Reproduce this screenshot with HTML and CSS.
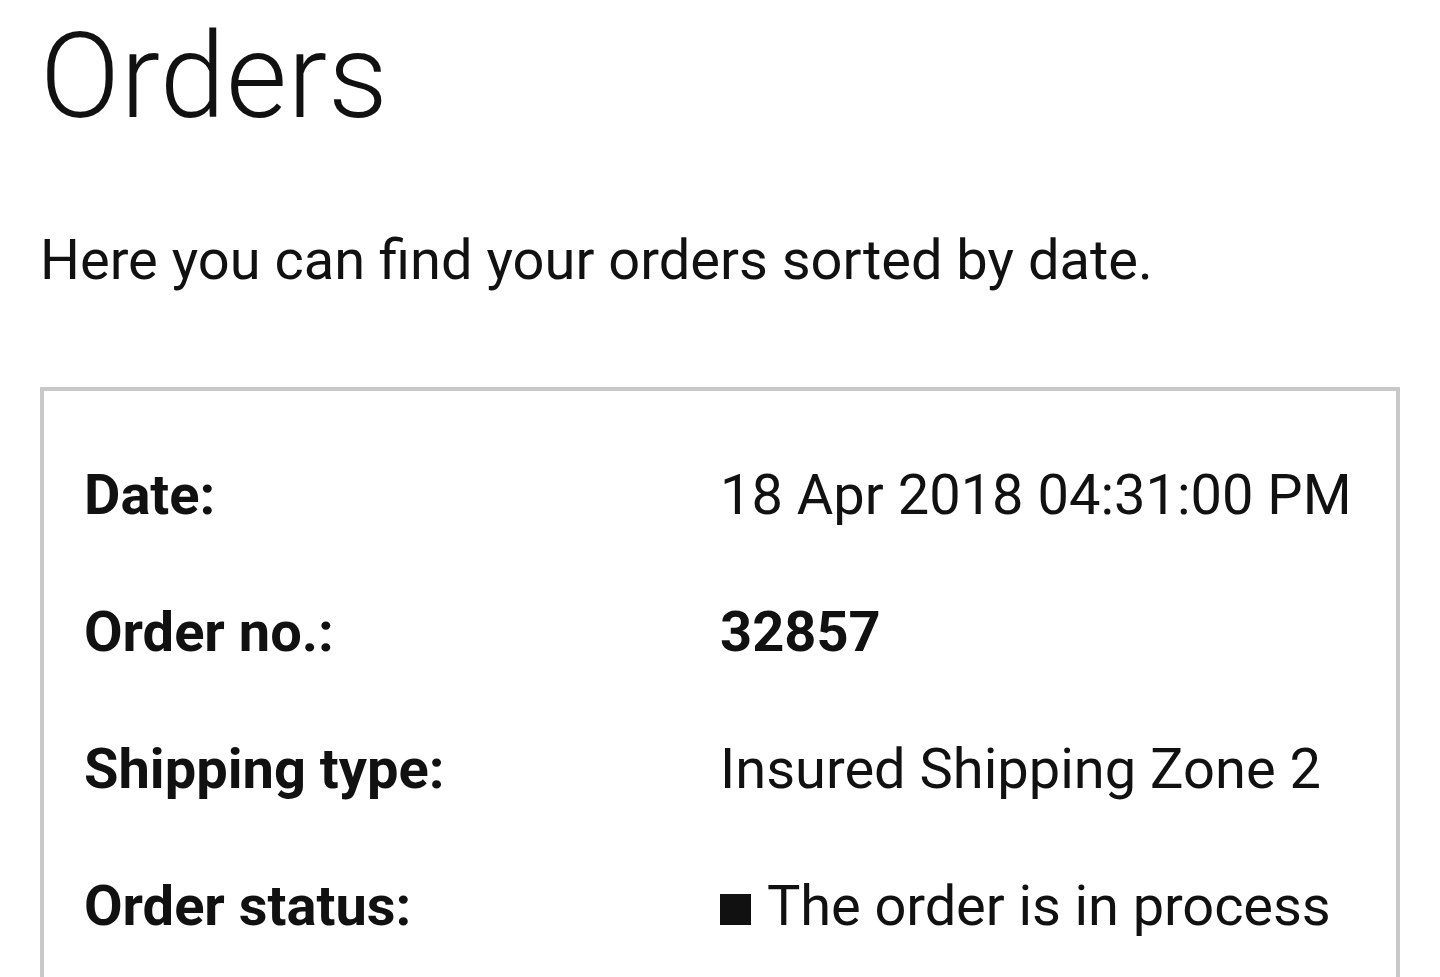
FILE: index.html
```html
<!DOCTYPE html>
<html lang="en">
<head>
<meta charset="utf-8">
<title>Orders</title>
<link rel="stylesheet" href="styles.css">
</head>
<body>
<main class="page">
  <h1 class="title">Orders</h1>
  <p class="intro">Here you can find your orders sorted by date.</p>
  <section class="order-card">
    <div class="row">
      <div class="label">Date:</div>
      <div class="value">18 Apr 2018 04:31:00 PM</div>
    </div>
    <div class="row">
      <div class="label">Order no.:</div>
      <div class="value strong">32857</div>
    </div>
    <div class="row">
      <div class="label">Shipping type:</div>
      <div class="value">Insured Shipping Zone 2</div>
    </div>
    <div class="row">
      <div class="label">Order status:</div>
      <div class="value status"><span class="status-square"></span>The order is in process</div>
    </div>
  </section>
</main>
</body>
</html>
```
FILE: styles.css
```css
html, body {
  margin: 0;
  padding: 0;
  background: #ffffff;
}
body {
  font-family: Roboto, "Noto Sans", sans-serif;
  color: #111111;
  overflow: hidden;
}
.page {
  padding: 0 40px;
}
.title {
  margin: 18px 0 0 0;
  font-size: 118px;
  font-weight: 300;
  line-height: 1;
  letter-spacing: 0.6px;
}
.intro {
  margin: 96px 0 0 0;
  font-size: 56px;
  line-height: 1;
}
.order-card {
  margin-top: 99px;
  border: 4px solid #c8c8c8;
  padding: 36px 40px 40px 40px;
  width: 1360px;
  box-sizing: border-box;
}
.row {
  display: grid;
  grid-template-columns: 636px 1fr;
  font-size: 56px;
  line-height: 137px;
  height: 137px;
}
.label {
  font-weight: 700;
}
.strong {
  font-weight: 700;
}
.status {
  display: flex;
  align-items: center;
  letter-spacing: -0.1px;
}
.status-square {
  display: inline-block;
  width: 31px;
  height: 31px;
  background: #111111;
  margin-right: 16px;
  margin-top: 6px;
}
```
